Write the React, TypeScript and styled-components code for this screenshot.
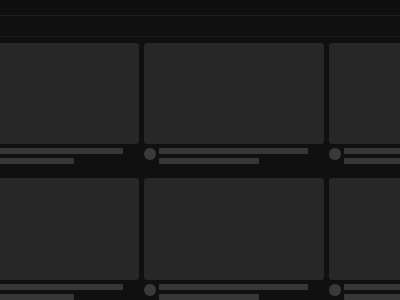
import React from "react";
import styled, { createGlobalStyle } from "styled-components";

const Global = createGlobalStyle`
  html, body {
    margin: 0;
    padding: 0;
    background: #101010;
    overflow: hidden;
    font-family: "Liberation Sans", Arial, sans-serif;
  }
  #root {
    width: 400px;
    height: 300px;
    overflow: hidden;
  }
`;

const Page = styled.div`
  width: 400px;
  height: 300px;
  background: #101010;
  overflow: hidden;
`;

const TopBar = styled.header`
  height: 15px;
  background: #0f0f0f;
  border-bottom: 1px solid #1d1d1d;
`;

const ChipBar = styled.div`
  height: 20px;
  background: #101010;
  border-bottom: 1px solid #1d1d1d;
`;

const Grid = styled.div`
  display: grid;
  grid-template-columns: repeat(3, 180px);
  column-gap: 5px;
  row-gap: 14px;
  margin-left: -41px;
  padding-top: 6px;
`;

const Item = styled.div`
  display: flex;
  flex-direction: column;
`;

const Thumb = styled.div`
  width: 180px;
  aspect-ratio: 16 / 9;
  border-radius: 3px;
  background: #272727;
`;

const Meta = styled.div`
  display: flex;
  gap: 3px;
  margin-top: 4px;
`;

const Avatar = styled.div`
  width: 12px;
  height: 12px;
  border-radius: 50%;
  background: #3a3a3a;
  flex: none;
`;

const Lines = styled.div`
  display: flex;
  flex-direction: column;
  gap: 4px;
`;

const Bar = styled.div<{ $w: number }>`
  width: ${(p) => p.$w}px;
  height: 6px;
  border-radius: 1px;
  background: #373737;
`;

export default function App() {
  const items = Array.from({ length: 6 });
  return (
    <>
      <Global />
      <Page>
        <TopBar />
        <ChipBar />
        <Grid>
          {items.map((_, i) => (
            <Item key={i}>
              <Thumb />
              <Meta>
                <Avatar />
                <Lines>
                  <Bar $w={149} />
                  <Bar $w={100} />
                </Lines>
              </Meta>
            </Item>
          ))}
        </Grid>
      </Page>
    </>
  );
}
